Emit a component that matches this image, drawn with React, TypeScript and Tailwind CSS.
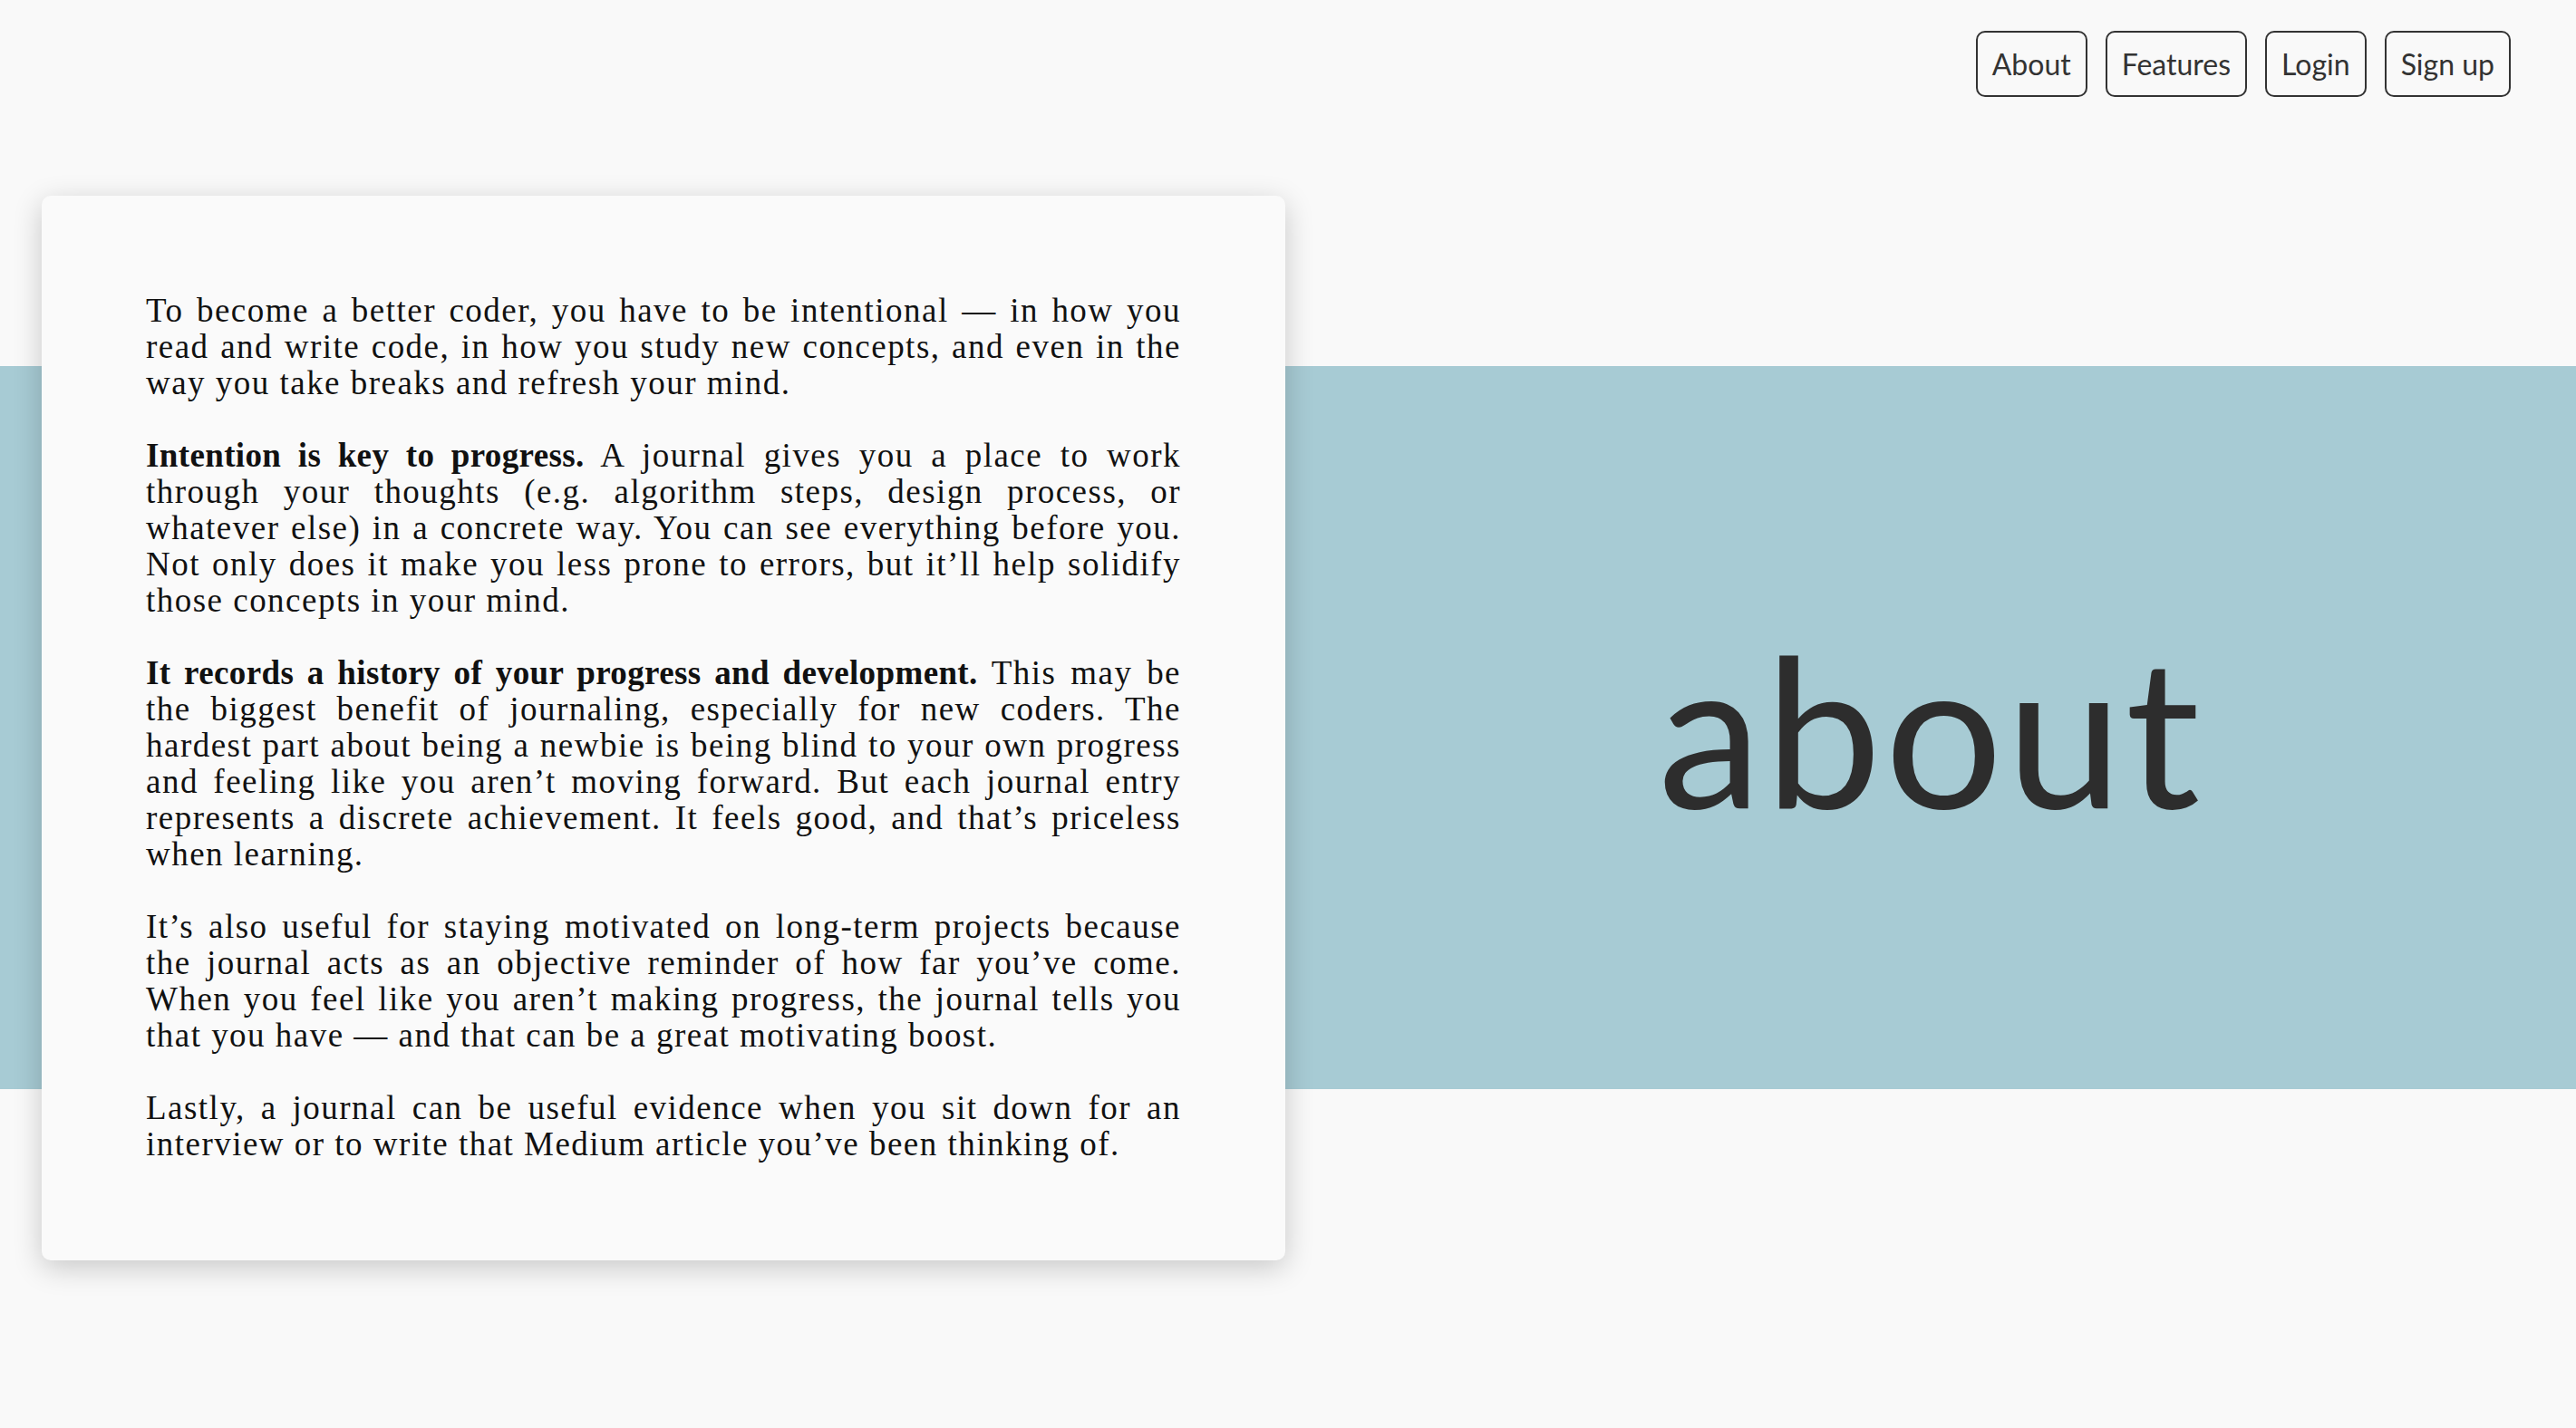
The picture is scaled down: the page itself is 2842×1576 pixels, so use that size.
import React from "react";

const navItems = ["About", "Features", "Login", "Sign up"];

export default function App() {
  return (
    <div className="min-h-screen bg-[#f9f9f9]">
      {/* top nav */}
      <nav className="flex justify-end gap-5 pt-[34px] pr-[72px]">
        {navItems.map((item) => (
          <a
            key={item}
            href=""
            className="flex h-[73px] items-center rounded-[10px] border-2 border-[#333] px-[16px] text-[32px] text-[#333] font-['Lato',sans-serif]"
          >
            {item}
          </a>
        ))}
      </nav>

      {/* band + card */}
      <div className="grid mt-[109px] pb-[189px]">
        <div className="col-start-1 row-start-1 mt-[188px] flex h-[798px] items-center bg-[#a7cbd4] pl-[1418px]">
          <h1 className="flex-1 text-center text-[230px] leading-none tracking-[0.015em] text-[#2d2d2d] font-['Lato',sans-serif] font-normal">
            about
          </h1>
        </div>
        <div className="col-start-1 row-start-1 justify-self-start ml-[46px] w-[1372px] rounded-[10px] bg-[#fafafa] px-[115px] pt-[107px] pb-[108px] shadow-[0_8px_32px_rgba(0,0,0,0.2)]">
          <div className="flex flex-col gap-10 text-justify text-[37px] leading-[40px] tracking-[0.04em] text-[#111] font-['Liberation_Serif',serif]">
            <p>
              To become a better coder, you have to be intentional — in how you
              read and write code, in how you study new concepts, and even in
              the way you take breaks and refresh your mind.
            </p>
            <p>
              <b className="tracking-[0.01em]">Intention is key to progress.</b>{" "}
              A journal gives you a place to work through your thoughts (e.g.
              algorithm steps, design process, or whatever else) in a concrete
              way. You can see everything before you. Not only does it make you
              less prone to errors, but it’ll help solidify those concepts in
              your mind.
            </p>
            <p>
              <b className="tracking-[0.01em]">
                It records a history of your progress and development.
              </b>{" "}
              This may be the biggest benefit of journaling, especially for new
              coders. The hardest part about being a newbie is being blind to
              your own progress and feeling like you aren’t moving forward. But
              each journal entry represents a discrete achievement. It feels
              good, and that’s priceless when learning.
            </p>
            <p>
              It’s also useful for staying motivated on long-term projects
              because the journal acts as an objective reminder of how far
              you’ve come. When you feel like you aren’t making progress, the
              journal tells you that you have — and that can be a great
              motivating boost.
            </p>
            <p>
              Lastly, a journal can be useful evidence when you sit down for an
              interview or to write that Medium article you’ve been thinking
              of.
            </p>
          </div>
        </div>
      </div>
    </div>
  );
}
